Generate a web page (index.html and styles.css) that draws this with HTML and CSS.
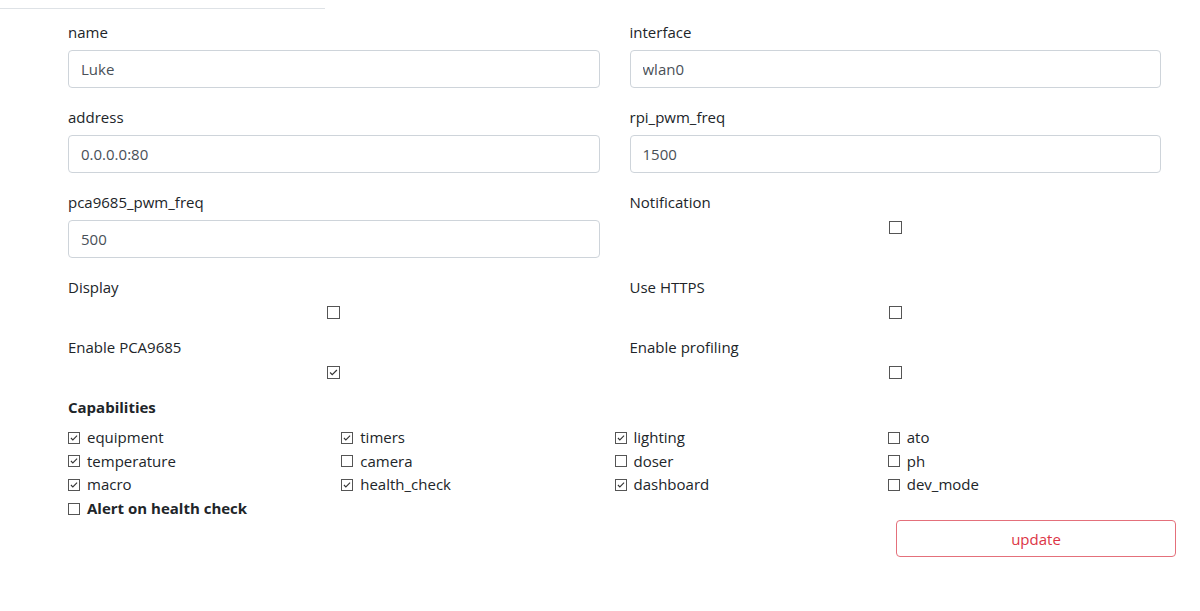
FILE: index.html
```html
<!DOCTYPE html>
<html lang="en">

<head>
  <meta charset="UTF-8">
  <meta name="viewport" content="width=device-width, initial-scale=1.0">
  <title>Settings</title>

  <link rel="stylesheet" href="styles.css">
</head>

<body>
  <div class="tab-line"></div>

  <form class="settings">
    <div class="fields">
      <div class="field">
        <label class="field-label">name</label>
        <input class="text-input" type="text" value="Luke">
      </div>
      <div class="field">
        <label class="field-label">interface</label>
        <input class="text-input" type="text" value="wlan0">
      </div>
      <div class="field">
        <label class="field-label">address</label>
        <input class="text-input" type="text" value="0.0.0.0:80">
      </div>
      <div class="field">
        <label class="field-label">rpi_pwm_freq</label>
        <input class="text-input" type="text" value="1500">
      </div>
      <div class="field">
        <label class="field-label">pca9685_pwm_freq</label>
        <input class="text-input" type="text" value="500">
      </div>
      <div class="field">
        <label class="field-label toggle-label">Notification</label>
        <div class="toggle"><span class="box"></span></div>
      </div>
      <div class="field">
        <label class="field-label toggle-label">Display</label>
        <div class="toggle"><span class="box"></span></div>
      </div>
      <div class="field">
        <label class="field-label toggle-label">Use HTTPS</label>
        <div class="toggle"><span class="box"></span></div>
      </div>
      <div class="field">
        <label class="field-label toggle-label">Enable PCA9685</label>
        <div class="toggle">
          <span class="box"><svg viewBox="0 0 13 13"><path d="M2.5 6.5 L5 9 L10.5 3.5" /></svg></span>
        </div>
      </div>
      <div class="field">
        <label class="field-label toggle-label">Enable profiling</label>
        <div class="toggle"><span class="box"></span></div>
      </div>
    </div>

    <div class="capabilities">
      <h6 class="caps-title">Capabilities</h6>
      <div class="caps-grid">
        <label class="cap"><span class="box"><svg viewBox="0 0 13 13"><path d="M2.5 6.5 L5 9 L10.5 3.5" /></svg></span>equipment</label>
        <label class="cap"><span class="box"><svg viewBox="0 0 13 13"><path d="M2.5 6.5 L5 9 L10.5 3.5" /></svg></span>timers</label>
        <label class="cap"><span class="box"><svg viewBox="0 0 13 13"><path d="M2.5 6.5 L5 9 L10.5 3.5" /></svg></span>lighting</label>
        <label class="cap"><span class="box"></span>ato</label>

        <label class="cap"><span class="box"><svg viewBox="0 0 13 13"><path d="M2.5 6.5 L5 9 L10.5 3.5" /></svg></span>temperature</label>
        <label class="cap"><span class="box"></span>camera</label>
        <label class="cap"><span class="box"></span>doser</label>
        <label class="cap"><span class="box"></span>ph</label>

        <label class="cap"><span class="box"><svg viewBox="0 0 13 13"><path d="M2.5 6.5 L5 9 L10.5 3.5" /></svg></span>macro</label>
        <label class="cap"><span class="box"><svg viewBox="0 0 13 13"><path d="M2.5 6.5 L5 9 L10.5 3.5" /></svg></span>health_check</label>
        <label class="cap"><span class="box"><svg viewBox="0 0 13 13"><path d="M2.5 6.5 L5 9 L10.5 3.5" /></svg></span>dashboard</label>
        <label class="cap"><span class="box"></span>dev_mode</label>
      </div>
      <label class="cap cap-alert"><span class="box"></span>Alert on health check</label>
    </div>

    <div class="actions">
      <button class="btn-update" type="button">update</button>
    </div>
  </form>
</body>

</html>
```

FILE: styles.css
```css
/* document */
* {
  box-sizing: border-box;
}

body {
  margin: 0;
  font-family: "Open Sans", "Noto Sans", sans-serif;
  font-size: 15px;
  color: #212529;
  background: #fff;
}

/* strip left over from the tab bar */
.tab-line {
  width: 325px;
  margin-top: 8px;
  border-top: 1px solid #dee2e6;
}

/* form */
.settings {
  width: 1123px;
  margin-left: 53px;
  padding-top: 11px;
}

.fields {
  display: grid;
  grid-template-columns: 1fr 1fr;
}

.field {
  padding: 0 15px;
  margin-bottom: 17px;
}

.field-label {
  display: block;
  line-height: 24px;
  margin-bottom: 6px;
}

.toggle-label {
  margin-bottom: 7px;
}

.text-input {
  display: block;
  width: 100%;
  height: 38px;
  padding: 0 12px;
  font: inherit;
  color: #495057;
  border: 1px solid #ced4da;
  border-radius: 4px;
  background: #fff;
}

/* checkbox look */
.box {
  display: inline-block;
  width: 13px;
  height: 13px;
  border: 1px solid #555;
  background: #fff;
  vertical-align: middle;
}

.box svg {
  display: block;
  width: 11px;
  height: 11px;
  fill: none;
  stroke: #333;
  stroke-width: 1.4;
}

.toggle {
  display: flex;
  justify-content: center;
  height: 12px;
}

.toggle .box {
  display: block;
}

/* capabilities */
.capabilities {
  padding: 0 15px;
}

.caps-title {
  margin: 0 0 7px 0;
  font-size: 15px;
  font-weight: 700;
  line-height: 24px;
}

.caps-grid {
  display: grid;
  grid-template-columns: repeat(4, 1fr);
}

.cap {
  display: flex;
  align-items: center;
  gap: 7px;
  line-height: 23.6px;
  color: #212529;
}

.cap .box {
  width: 12px;
  height: 12px;
}

.cap .box svg {
  width: 10px;
  height: 10px;
}

.cap-alert {
  font-weight: 700;
}

/* submit */
.actions {
  display: flex;
  justify-content: flex-end;
}

.btn-update {
  width: 280px;
  height: 37px;
  font: inherit;
  color: #dc3545;
  background: #fff;
  border: 1px solid #e4707b;
  border-radius: 4px;
}
```
